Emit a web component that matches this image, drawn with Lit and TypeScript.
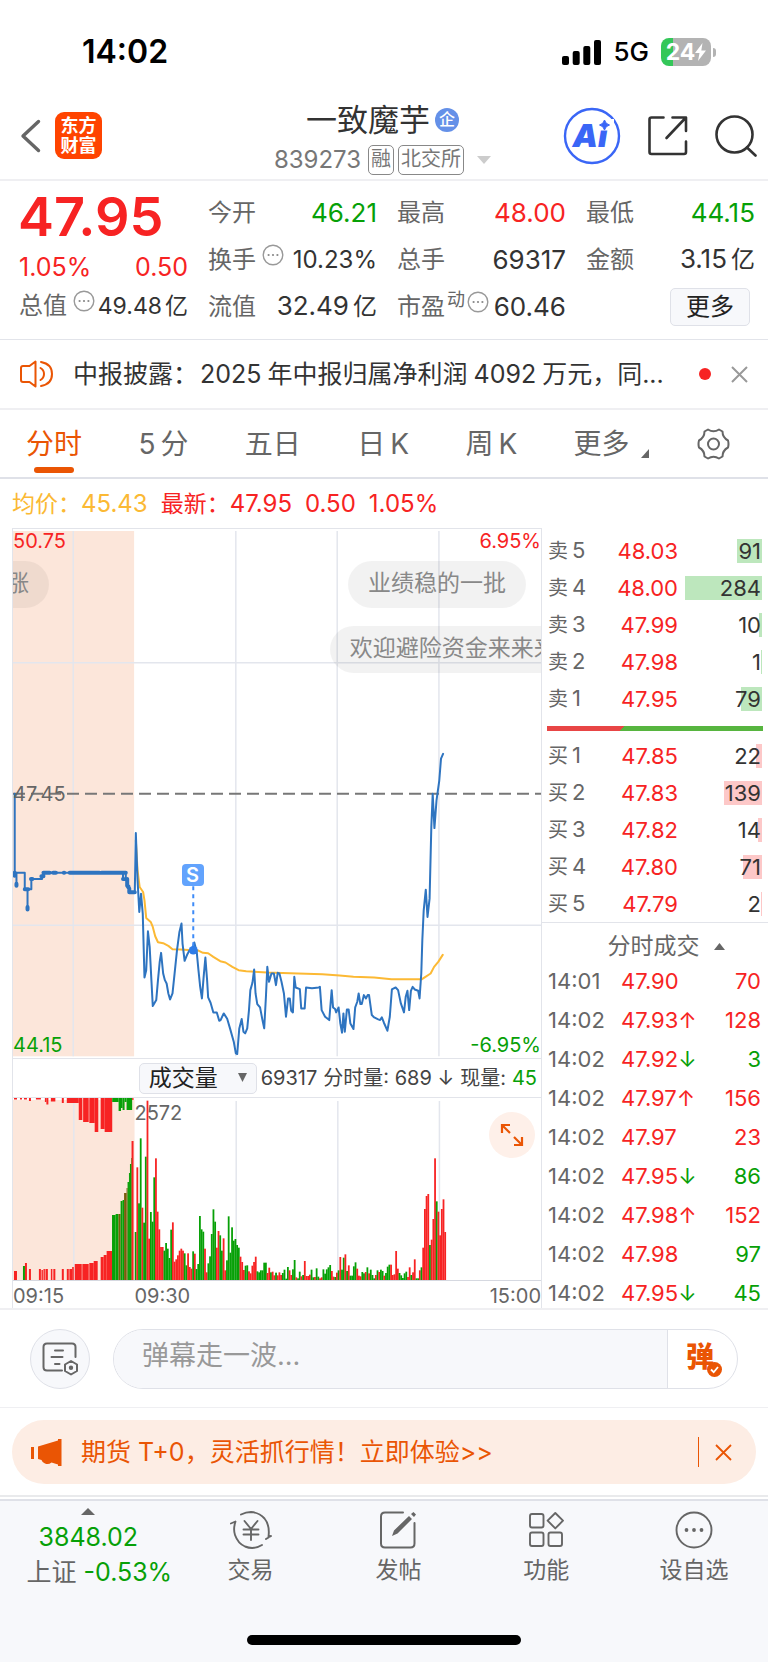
import { LitElement, html, svg, css } from "lit";
import { customElement } from "lit/decorators.js";

const SELLS = [
  { n: 5, price: "48.03", vol: 91, bar: 25 },
  { n: 4, price: "48.00", vol: 284, bar: 77 },
  { n: 3, price: "47.99", vol: 10, bar: 3 },
  { n: 2, price: "47.98", vol: 1, bar: 1 },
  { n: 1, price: "47.95", vol: 79, bar: 21 },
];
const BUYS = [
  { n: 1, price: "47.85", vol: 22, bar: 6 },
  { n: 2, price: "47.83", vol: 139, bar: 38 },
  { n: 3, price: "47.82", vol: 14, bar: 4 },
  { n: 4, price: "47.80", vol: 71, bar: 19 },
  { n: 5, price: "47.79", vol: 2, bar: 1 },
];
const TICKS: [string, string, string, number, string][] = [
  ["14:01", "47.90", "", 70, "up"],
  ["14:02", "47.93", "↑", 128, "up"],
  ["14:02", "47.92", "↓", 3, "down"],
  ["14:02", "47.97", "↑", 156, "up"],
  ["14:02", "47.97", "", 23, "up"],
  ["14:02", "47.95", "↓", 86, "down"],
  ["14:02", "47.98", "↑", 152, "up"],
  ["14:02", "47.98", "", 97, "down"],
  ["14:02", "47.95", "↓", 45, "down"],
];

const PRE_LINE =
  "41,40 41,277 46,277 46,316 46,277 70,277 70,327 78,327 78,388 78,327 89,327 89,296 120,296 120,286 126,286 126,277 362,277 354,277 354,296 362,296 362,277 362,296 368,296 368,316 372,316 372,336 388,336";
const PRICE_LINE =
  "388,336 391,158 396,300 401,395 406,340 411,400 416,592 421,570 426,453 431,500 436,600 440,678 450,660 455,600 460,545 464,518 470,580 475,600 480,610 485,640 490,658 497,640 502,590 510,510 517,455 523,430 526,490 532,542 540,522 545,512 553,512 560,487 567,515 572,570 577,620 582,655 587,590 592,532 597,600 600,652 607,668 615,697 625,697 632,722 636,720 645,700 655,716 664,748 674,785 680,820 684,822 690,745 697,717 702,755 707,760 713,745 718,690 722,630 728,608 733,568 737,640 742,672 750,682 757,720 762,745 767,650 771,560 776,605 783,580 790,580 796,615 801,578 806,580 812,605 819,640 825,710 831,655 836,655 840,692 845,697 849,590 853,622 865,627 869,685 879,685 883,622 900,624 920,622 923,620 928,690 938,710 950,720 957,630 961,682 967,687 970,697 977,682 982,730 987,758 991,700 995,755 1001,688 1006,688 1011,730 1020,747 1025,682 1031,665 1035,640 1040,672 1044,672 1050,645 1056,655 1061,645 1065,645 1073,705 1080,712 1090,717 1097,720 1102,712 1108,728 1118,752 1125,710 1131,628 1142,622 1149,630 1157,670 1166,697 1171,650 1176,632 1181,690 1186,632 1191,620 1197,628 1207,632 1211,655 1216,580 1219,480 1223,390 1229,328 1234,410 1240,355 1245,140 1249,40 1254,143 1260,60 1268,0 1273,-66 1279,-80";
const AVG_LINE =
  "391,180 396,270 402,320 412,335 416,360 421,413 434,425 440,440 447,468 455,486 470,489 485,497 497,507 520,508 555,510 572,511 585,518 600,519 615,530 635,543 650,547 670,560 688,570 710,573 770,577 860,580 930,582 980,586 1020,590 1080,592 1130,597 1218,597 1228,590 1243,580 1253,560 1265,545 1278,524";

/* One entry per minute from 09:30: colour letter, then height. */
const MINUTES =
  "g144 r338 g230 g425 r217 g172 g370 r538 r124 g204 g175 g308 r365 r205 r152 r99 r99 g88 g111 g94 g66 g151 r173 r55 r62 r74 r88 r94 r88 g80 g44 r80 r39 r34 g86 r79 g33 g48 g192 g152 g145 r94 r23 g50 g71 g138 g212 g175 r97 r147 g134 g88 r125 r29 g59 g191 g82 g158 g118 g123 g105 g97 r70 r54 r30 g43 g44 r26 r20 r43 r54 r70 g26 g23 g29 g29 g52 g52 r21 r37 g23 r25 r14 g22 r14 r23 r15 g21 g31 g4 g39 r29 r15 g32 g60 r8 g5 g25 r11 g15 r57 r12 r12 r16 g31 g8 r9 g35 g10 r5 r8 g32 g19 g32 g38 g45 r27 r10 g9 r22 g29 r69 g31 g67 r77 g27 r44 g13 g13 g41 g53 r34 r13 r11 g24 g20 r24 g38 r20 g31 g15 g5 r15 g29 r24 g31 g27 r13 g21 g40 g46 r46 r15 r17 r87 r34 g21 g14 g6 g20 g25 r9 r38 g15 r23 r62 g5 g5 r29 g38 r97 r213 r252 r258 g105 r121 r183 r365 g236 r205 r134 r213 r242 r144".split(" ");

/* Call auction: [x start, x end, height, colour]. */
const PRE_BARS: [number, number, number, string][] = [
  [1, 4, 9, "r"], [10, 12, 14, "g"], [12, 14, 17, "r"], [16, 18, 11, "r"], [26, 28, 11, "r"],
  [28.6, 30, 10, "r"], [30.6, 32, 11, "r"], [32.6, 35, 11, "r"], [38, 39.5, 11, "r"], [40.5, 42.5, 11, "r"],
  [49, 51, 11, "r"], [54, 56, 11, "r"], [56.6, 59.4, 11, "r"], [59.4, 61, 13, "r"], [62, 69, 16, "r"],
  [69.6, 76, 16, "r"], [76.6, 81, 17, "r"], [81, 85, 19, "r"], [88, 91, 23, "r"], [91, 94, 25, "r"],
  [94, 99.4, 29, "r"], [99.4, 103, 65, "g"], [103, 106, 66, "g"], [106, 108, 66, "b"], [108, 110, 79, "g"],
  [110, 111.5, 80, "g"], [111.5, 114, 87, "b"], [114, 115, 92, "b"], [115, 116.4, 98, "g"], [116.4, 117.4, 107, "g"],
  [117.4, 118.7, 116, "g"], [118.7, 119.4, 122, "g"], [119, 121, 139, "r"],
];
const PRE_TOP: [number, number, number, string][] = [
  [1, 4, 1.5, "r"], [7, 9, 1.5, "r"], [11, 14, 1.5, "r"], [16, 18, 3, "r"], [23, 28, 1.5, "r"],
  [32, 33.5, 4, "r"], [33.5, 35.5, 6.5, "r"], [38, 42.5, 3.5, "r"], [49, 51, 5, "r"], [54, 66, 5, "r"],
  [66, 69.6, 22, "r"], [70.4, 76, 24, "r"], [76.6, 82, 25, "r"], [82, 85.6, 34, "r"], [88, 92, 31, "r"],
  [92, 99.6, 34, "r"], [99.6, 106, 4, "g"], [106, 108.4, 13, "g"], [108.4, 110, 10, "g"], [110, 112, 12, "g"],
  [112, 114, 4, "g"], [114, 119.6, 12, "g"], [119.6, 121, 2, "r"],
];
const HUE: Record<string, string> = { r: "#f72323", g: "#07a007", b: "#7a5c0c" };

const infoIcon = html`<svg class="info" viewBox="0 0 22 22" aria-hidden="true">
  <circle cx="11" cy="11" r="9.8" fill="none" stroke="#999" stroke-width="1.4" />
  <circle cx="6.6" cy="11" r="1.1" fill="#888" /><circle cx="11" cy="11" r="1.1" fill="#888" /><circle cx="15.4" cy="11" r="1.1" fill="#888" />
</svg>`;

@customElement("app-root")
export class AppRoot extends LitElement {
  static styles = css`
    :host {
      display: block;
      background: #fff;
      color: #333;
      font-family: Inter, "Noto Sans CJK SC", sans-serif;
      font-size: 24px;
      line-height: 32px;
      --red: #f72323;
      --green: #07a007;
      --orange: #ea5504;
      --line: #e2e4ea;
    }
    * { box-sizing: border-box; }
    button { font: inherit; color: inherit; background: none; border: 0; padding: 0; margin: 0; display: flex; align-items: center; justify-content: center; }
    a { color: inherit; text-decoration: none; }
    svg { display: block; flex: none; }
    table { border-collapse: collapse; width: 100%; }
    td, th { padding: 0; font-weight: 400; }
    .up { color: var(--red); }
    .down { color: var(--green); }
    .num { margin: 0 6px; }
    .unit { margin-left: 4px; font-size: 24px; }

    .status { display: flex; align-items: center; height: 90px; padding: 14px 52px 0 82px; color: #000; }
    .clock { flex: 1; font-size: 32px; font-weight: 600; }
    .net { font-size: 26px; font-weight: 500; margin: 0 12px; }
    .battery { display: flex; align-items: center; gap: 2px; }
    .cell { display: flex; align-items: center; justify-content: center; width: 50px; height: 28px; border-radius: 8px; color: #fff; font-size: 23px; font-weight: 700; background: linear-gradient(90deg, #34c759 24%, #b3b3b3 24%); }
    .nub { width: 3px; height: 9px; border-radius: 0 3px 3px 0; background: #b3b3b3; }

    .header { display: grid; grid-template-columns: 1fr auto 1fr; align-items: center; height: 91px; padding: 2px 11px 0 20px; border-bottom: 2px solid #efeff2; }
    .left, .right { display: flex; align-items: center; }
    .left { gap: 14px; }
    .right { justify-content: flex-end; gap: 26px; }
    .logo { display: block; width: 47px; height: 47px; padding: 4px 0 0 0; border-radius: 9px; background: #ff4400; color: #fff; font-size: 18px; line-height: 20px; font-weight: 700; text-align: center; }
    .title { display: flex; flex-direction: column; align-items: center; margin-right: 12px; padding-top: 6px; }
    .name { display: flex; align-items: center; gap: 5px; margin: 0; font-size: 31px; line-height: 43px; font-weight: 400; }
    .corp { width: 24px; height: 24px; border-radius: 12px; background: #6490e8; color: #fff; font-size: 16px; line-height: 23px; font-weight: 500; text-align: center; }
    .code { display: flex; align-items: center; gap: 4px; height: 38px; color: #777; }
    .tag { height: 30px; padding: 0 2px; border: 1px solid #888; border-radius: 5px; font-size: 20px; line-height: 27px; }
    .code .digits { margin-right: 3px; }
    .code svg { margin-left: 9px; }

    .quote { display: grid; grid-template-columns: repeat(4, minmax(0, 1fr)); gap: 20px; padding: 8px 13px 9px 19px; border-bottom: 1px solid var(--line); font-size: 26px; }
    .cellrow { display: flex; align-items: center; justify-content: space-between; height: 47px; white-space: nowrap; }
    .cellrow.chg { height: 44px; font-size: 25px; }
    .cellrow.low { height: 33px; }
    .cellrow .tight, .cellrow .tight .unit { font-size: 23px; }
    .cellrow .snug { font-size: 24px; }
    .cellrow .tight .unit { margin-left: 3px; }
    .label { display: flex; align-items: center; color: #666; font-size: 24px; }
    .big { height: 56px; font-size: 54px; line-height: 56px; font-weight: 600; margin-left: -1px; }
    .info { width: 22px; height: 22px; margin: 0 0 10px 6px; }
    .sup { font-size: 18px; line-height: 20px; margin: 0 0 14px 2px; }
    .sup + .info { margin-left: 2px; }
    .morebtn { width: 80px; height: 38px; margin: 0 5px 0 auto; border: 1px solid #dfe1e8; border-radius: 5px; background: #f7f8fb; color: #222; font-size: 24px; }

    .news { display: flex; align-items: center; height: 70px; padding: 0 20px; border-bottom: 2px solid #efeff2; font-size: 25px; }
    .news a { flex: 1; min-width: 0; margin-left: 19px; white-space: nowrap; overflow: hidden; }
    .news .year { margin: 0 6px 0 2px; }
    .reddot { width: 12px; height: 12px; border-radius: 6px; background: var(--red); margin-right: 20px; }

    .tabs { display: flex; justify-content: space-between; align-items: center; height: 69px; padding: 0 38px 0 26px; border-bottom: 2px solid #dfe1e8; color: #666; font-size: 28px; }
    .tab { position: relative; height: 67px; white-space: nowrap; gap: 5px; }
    .tab.last { margin-right: -8px; }
    .tab.on { color: var(--orange); }
    .tab.on::after { content: ""; position: absolute; bottom: 4px; left: 8px; right: 8px; height: 6px; border-radius: 3px; background: var(--orange); }
    .corner { align-self: flex-end; margin: 0 0 19px 6px; }

    .legend { display: flex; align-items: center; gap: 13px; height: 49px; padding-left: 12px; }
    .legend .avg { color: #fbb934; }
    .legend .k { font-size: 23px; }

    .main { display: grid; grid-template-columns: minmax(0, 1fr) 226px; padding-left: 12px; overflow: hidden; border-bottom: 2px solid #efeff2; }
    .charts { border-left: 1px solid var(--line); border-right: 1px solid var(--line); border-top: 1px solid var(--line); }
    .plot { position: relative; height: 530px; overflow: hidden; border-bottom: 1px solid var(--line); font-size: 20px; line-height: 24px; color: #666; }
    .plot > svg, .volume > svg { width: 100%; height: 100%; }
    .tl, .tr, .bl, .br, .ml { position: absolute; }
    .tl, .tr { top: 0; }
    .tl, .bl, .ml { left: 0; }
    .tr, .br { right: 0; }
    .bl, .br { bottom: 1px; }
    .ml { top: 50%; transform: translateY(-50%); }
    .bullet { position: absolute; padding: 0 20px; height: 47px; border-radius: 24px; background: rgba(0, 0, 0, 0.05); color: #888; font-size: 23px; line-height: 45px; white-space: nowrap; }
    .b1 { top: 32px; right: calc(100% - 36px); }
    .b2 { top: 32px; right: 15px; }
    .b3 { top: 97px; left: 60%; }
    .mark { position: absolute; left: 34%; top: 335px; width: 22px; height: 22px; margin-left: -11px; border-radius: 4px; background: #62a3fd; color: #fff; font-size: 20px; line-height: 22px; font-weight: 600; text-align: center; }

    .volbar { display: flex; align-items: center; justify-content: flex-end; height: 39px; padding-right: 4px; font-size: 20px; line-height: 24px; color: #444; white-space: nowrap; border-bottom: 1px solid var(--line); }
    .pick { position: relative; margin-right: 4px; }
    .pick select { appearance: none; display: block; width: 118px; height: 31px; padding: 0 0 2px 9px; border: 1px solid #dfe1e8; border-radius: 5px; background: #f7f8fb; color: #222; font: inherit; font-size: 23px; line-height: 28px; }
    .pick svg { position: absolute; right: 10px; top: 10px; }
    .volbar .sp { margin-left: 6px; }
    .volume { position: relative; height: 183px; border-bottom: 1px solid #d5d8e0; font-size: 20px; line-height: 24px; color: #666; }
    .peak { position: absolute; left: 23%; top: 3px; }
    .expand { position: absolute; right: 6px; top: 14px; width: 46px; height: 46px; border-radius: 23px; background: #fef0e9; }
    .times { display: grid; grid-template-columns: 23% 1fr auto; height: 27px; padding: 3px 0 0 0; font-size: 20px; line-height: 24px; color: #666; }

    .book { min-width: 0; font-size: 22px; line-height: 28px; }
    .side { padding: 0 6px; }
    .side.first { padding-top: 4px; }
    .side table { table-layout: fixed; }
    .side tr { height: 37px; }
    .side th { width: 50px; text-align: left; color: #666; }
    .side th span { font-size: 20px; margin-right: 4px; }
    .side .p { width: 80px; text-align: right; color: var(--red); }
    .side .v { text-align: right; padding-right: 1px; background-repeat: no-repeat; background-position: right center; }
    .side .sell { background-image: linear-gradient(#bde7bd, #bde7bd); }
    .side .buy { background-image: linear-gradient(#fdc8c8, #fdc8c8); }
    .ratio { height: 5px; margin: 9px 5px 6px 5px; background: linear-gradient(135deg, #e84545 35%, #57b53f 35%); }
    .tickhead { display: flex; align-items: center; justify-content: center; gap: 14px; width: 100%; height: 39px; padding: 8px 0 0 22px; border-top: 1px solid var(--line); color: #666; font-size: 23px; }
    .ticks { width: 100%; margin-bottom: -5px; padding: 0 7px 0 6px; }
    .ticks tr { height: 39px; }
    .ticks .t { width: 73px; color: #666; text-align: left; }
    .ticks .q { text-align: right; }

    .talk { display: flex; align-items: center; gap: 23px; height: 98px; padding: 0 30px; border-bottom: 1px solid #efeff2; }
    .round { width: 60px; height: 60px; border: 1px solid #dfe1e8; border-radius: 30px; background: #f7f8fb; }
    .say { flex: 1; display: flex; height: 60px; border: 1px solid #dfe1e8; border-radius: 30px; overflow: hidden; }
    .say input { flex: 1; min-width: 0; border: 0; border-right: 1px solid #dfe1e8; background: #f7f8fb; padding: 0 0 6px 28px; font: inherit; font-size: 27px; outline: none; }
    .say input::placeholder { color: #999; opacity: 1; }
    .dan { position: relative; width: 69px; padding: 0 5px 4px 0; color: var(--orange); font-size: 28px; font-weight: 900; }
    .dan svg { position: absolute; right: 15px; bottom: 11px; }

    .promo-wrap { padding: 12px 12px 11px; border-bottom: 2px solid #e9eaec; }
    .promo { display: flex; align-items: center; height: 64px; padding: 0 24px 0 19px; border-radius: 32px; background: #fdede4; color: var(--orange); font-size: 25px; white-space: nowrap; }
    .promo a { flex: 1; margin-left: 19px; }
    .promo .bar { width: 1px; height: 30px; margin-right: 16px; background: var(--orange); }

    .nav { display: grid; grid-template-columns: 23% repeat(4, 1fr); margin-top: 2px; border-top: 2px solid #dfe1e8; padding-top: 7px; background: #f7f8fb; color: #666; font-size: 23px; height: 163px; position: relative; }
    .nav a { display: flex; flex-direction: column; align-items: center; white-space: nowrap; }
    .nav .item { padding-top: 3px; gap: 5px; }
    .nav .index { gap: 3px; font-size: 25px; line-height: 32px; }
    .nav .index svg { margin-bottom: 3px; }
    .nav .sh { padding-left: 22px; }
    .home { position: absolute; left: 50%; bottom: 17px; width: 274px; height: 10px; margin-left: -137px; border-radius: 5px; background: #000; }
  `;

  private grid(y0: number, y1: number) {
    return [210, 680, 973, 1267].map(
      (x) => svg`<line x1=${x} x2=${x} y1=${y0} y2=${y1} stroke="#e3e6ed" stroke-width="1.5" vector-effect="non-scaling-stroke"/>`
    );
  }

  private priceChart() {
    return html`<div class="plot">
      <svg viewBox="36 -756 1526 1590" preserveAspectRatio="none" role="img" aria-label="分时走势">
        <rect x="36" y="-750" width="350" height="1579" fill="#fce6da" />
        ${this.grid(-750, 829)}
        <path d="M36-354H1562M36 435H1562" stroke="#e3e6ed" stroke-width="1.5" vector-effect="non-scaling-stroke" />
        <path d="M36 40H1562" stroke="#777" stroke-width="2" stroke-dasharray="12 6" vector-effect="non-scaling-stroke" />
        <g fill="none" stroke-linejoin="round" stroke-linecap="round">
          <polyline points=${AVG_LINE} stroke="#fcb934" stroke-width="2" vector-effect="non-scaling-stroke" />
          <polyline points=${PRE_LINE} stroke="#2e74c0" stroke-width="2" vector-effect="non-scaling-stroke" />
          <polyline points=${PRICE_LINE} stroke="#2e74c0" stroke-width="2" vector-effect="non-scaling-stroke" />
          <path d="M41 277V286M46 310V316M78 380V388M70 327H80M88 296H92M118 288H124M124 277H142M152 277H160M183 277H184M200 277H286M292 277H362M354 296H356M366 296V316L372 325V336H388" stroke="#2e74c0" stroke-width="4" vector-effect="non-scaling-stroke" />
        </g>
        <path d="M557 318V500" stroke="#3d8bf8" stroke-width="2" stroke-dasharray="4 4" vector-effect="non-scaling-stroke" />
        <ellipse cx="557" cy="510" rx="13" ry="13" fill="#2f7de8" />
      </svg>
      <span class="tl up">50.75</span><span class="tr up">6.95%</span>
      <span class="ml">47.45</span>
      <span class="bl down">44.15</span><span class="br down">-6.95%</span>
      <span class="bullet b1">涨</span>
      <span class="bullet b2">业绩稳的一批</span>
      <span class="bullet b3">欢迎避险资金来来来</span>
      <span class="mark">S</span>
    </div>`;
  }

  private volumeChart() {
    return html`<div class="volume">
      <svg viewBox="0 0 530 182" preserveAspectRatio="none" role="img" aria-label="成交量">
        <rect x="0" y="2" width="122" height="180" fill="#fce6da" />
        ${[61, 224, 326, 428].map((x) => svg`<rect x=${x - 0.7} y="3" width="1.5" height="179" fill="#e3e6ed"/>`)}
        ${PRE_TOP.map(([a, b, h, c]) => svg`<rect x=${a} y="0" width=${b - a} height=${h} fill=${HUE[c]}/>`)}
        ${PRE_BARS.map(([a, b, h, c]) => svg`<rect x=${a} y=${182 - h} width=${b - a} height=${h} fill=${HUE[c]}/>`)}
        ${MINUTES.map((m, i) => {
          const h = Number(m.slice(1)) / 3;
          return svg`<rect x=${(122.2 + i * 1.698).toFixed(2)} y=${182 - h} width="1.8" height=${h} fill=${HUE[m[0]]}/>`;
        })}
      </svg>
      <span class="peak">2572</span>
      <button class="expand" aria-label="全屏">
        <svg width="24" height="24" viewBox="0 0 24 24" fill="none" stroke="#ea5504" stroke-width="2.2">
          <path d="M10 2H2V10M2 2L10 10M22 14V22H14M22 22L14 14" />
        </svg>
      </button>
    </div>`;
  }

  private side(name: string, kind: string, rows: typeof SELLS) {
    return html`<table>
      ${rows.map(
        (r) => html`<tr>
          <th scope="row"><span>${name}</span>${r.n}</th>
          <td class="p">${r.price}</td>
          <td class="v ${kind}" style="background-size:${r.bar}px 24px">${r.vol}</td>
        </tr>`
      )}
    </table>`;
  }

  render() {
    return html`
      <div class="status">
        <span class="clock">14:02</span>
        <svg width="39" height="25" viewBox="0 0 39 25">
          <rect x="0" y="16" width="7" height="9" rx="2" /><rect x="10.7" y="11" width="7" height="14" rx="2" /><rect x="21.3" y="6" width="7" height="19" rx="2" /><rect x="32" y="0" width="7" height="25" rx="2" />
        </svg>
        <span class="net">5G</span>
        <span class="battery">
          <span class="cell">24<svg width="11" height="18" viewBox="0 0 11 18"><path d="M7.5 0L0 10H4.5L3 18L11 7.5H6.3Z" fill="#fff" /></svg></span>
          <span class="nub"></span>
        </span>
      </div>

      <header class="header">
        <div class="left">
          <button aria-label="返回"><svg width="21" height="34" viewBox="0 0 21 34"><path d="M18.5 2.5L3 17L18.5 31.5" fill="none" stroke="#666" stroke-width="3.4" stroke-linecap="round" stroke-linejoin="round" /></svg></button>
          <a class="logo" href="#">东方<br />财富</a>
        </div>
        <div class="title">
          <h1 class="name">一致魔芋<span class="corp">企</span></h1>
          <div class="code">
            <span class="digits">839273</span><span class="tag">融</span><span class="tag">北交所</span>
            <svg width="14" height="8" viewBox="0 0 14 8"><path d="M0 0H14L7 8Z" fill="#ccc" /></svg>
          </div>
        </div>
        <div class="right">
          <button aria-label="Ai">
            <svg width="58" height="58" viewBox="0 0 58 58">
              <circle cx="29" cy="29" r="27" fill="none" stroke="#3a66f6" stroke-width="2.4" />
              <text x="27" y="40" text-anchor="middle" font-family="Inter, sans-serif" font-size="32" font-weight="900" font-style="italic" fill="#3a66f6">Ai</text>
              <rect x="35" y="12" width="16" height="11.5" fill="#fff" />
              <path d="M41.5 13Q42.5 17 46.5 18Q42.5 19 41.5 23Q40.5 19 36.5 18Q40.5 17 41.5 13Z" fill="#3a66f6" stroke="#3a66f6" stroke-width="1" />
            </svg>
          </button>
          <button aria-label="分享">
            <svg width="42" height="42" viewBox="0 0 42 42" fill="none" stroke="#333" stroke-width="2.6" stroke-linecap="round" stroke-linejoin="round">
              <path d="M16.5 2.5H4.5Q2.5 2.5 2.5 4.5V37Q2.5 39 4.5 39H37Q39 39 39 37V26.5M25.5 2.5H39V16M38 3.5L19.5 23" />
            </svg>
          </button>
          <button aria-label="搜索">
            <svg width="42" height="42" viewBox="0 0 42 42" fill="none" stroke="#333" stroke-width="2.6" stroke-linecap="round">
              <circle cx="19.5" cy="19.5" r="18" /><path d="M32 32.5L40.5 40.5" />
            </svg>
          </button>
        </div>
      </header>

      <section class="quote">
        <div>
          <div class="big up">47.95</div>
          <div class="cellrow chg up"><span>1.05%</span><span>0.50</span></div>
          <div class="cellrow low"><span class="label">总值${infoIcon}</span><span class="tight">49.48<span class="unit">亿</span></span></div>
        </div>
        <div>
          <div class="cellrow"><span class="label">今开</span><span class="down">46.21</span></div>
          <div class="cellrow"><span class="label">换手${infoIcon}</span><span class="snug">10.23%</span></div>
          <div class="cellrow"><span class="label">流值</span><span>32.49<span class="unit">亿</span></span></div>
        </div>
        <div>
          <div class="cellrow"><span class="label">最高</span><span class="up">48.00</span></div>
          <div class="cellrow"><span class="label">总手</span><span>69317</span></div>
          <div class="cellrow"><span class="label">市盈<span class="sup">动</span>${infoIcon}</span><span>60.46</span></div>
        </div>
        <div>
          <div class="cellrow"><span class="label">最低</span><span class="down">44.15</span></div>
          <div class="cellrow"><span class="label">金额</span><span>3.15<span class="unit">亿</span></span></div>
          <div class="cellrow"><button class="morebtn">更多</button></div>
        </div>
      </section>

      <section class="news">
        <svg width="34" height="28" viewBox="0 0 34 28" fill="none" stroke="#ea5504" stroke-width="2" stroke-linecap="round" stroke-linejoin="round">
          <path d="M15.5 1.5V26.5L9.5 22H3Q1 22 1 20V8Q1 6 3 6H9.5ZM20.5 8Q24 10 24 14Q24 18 20.5 20M21 2Q32 4 32 14Q32 24 21 26" />
        </svg>
        <a href="#">中报披露：<span class="year">2025</span>年中报归属净利润<span class="num">4092</span>万元，同...</a>
        <span class="reddot"></span>
        <button aria-label="关闭"><svg width="17" height="17" viewBox="0 0 17 17"><path d="M1 1L16 16M16 1L1 16" stroke="#999" stroke-width="2" /></svg></button>
      </section>

      <nav class="tabs">
        <button class="tab on">分时</button>
        <button class="tab"><span>5</span>分</button>
        <button class="tab">五日</button>
        <button class="tab">日<span>K</span></button>
        <button class="tab">周<span>K</span></button>
        <button class="tab last">更多<svg class="corner" width="8" height="9" viewBox="0 0 8 9"><path d="M8 0V9H0Z" fill="#666" /></svg></button>
        <button aria-label="设置">
          <svg width="33" height="32" viewBox="0 0 33 32" fill="none" stroke="#666" stroke-width="2" stroke-linejoin="round">
            <path d="M11 1.5Q16.5 5 22 1.5L25.5 3.5Q25.5 9.5 31 12.5Q32 16 31 19.5Q25.5 22.5 25.5 28.5L22 30.5Q16.5 27 11 30.5L7.5 28.5Q7.5 22.5 2 19.5Q1 16 2 12.5Q7.5 9.5 7.5 3.5Z" /><circle cx="16.5" cy="16" r="5.5" />
          </svg>
        </button>
      </nav>

      <div class="legend">
        <span class="avg"><span class="k">均价：</span>45.43</span>
        <span class="up"><span class="k">最新：</span>47.95</span>
        <span class="up">0.50</span>
        <span class="up">1.05%</span>
      </div>

      <section class="main">
        <div class="charts">
          ${this.priceChart()}
          <div class="volbar">
            <label class="pick"><select aria-label="指标"><option>成交量</option></select><svg width="9" height="9" viewBox="0 0 9 9"><path d="M0 0H9L4.5 9Z" fill="#666" /></svg></label>
            <span>69317</span><span class="sp">分时量: 689 ↓</span><span class="sp">现量:</span><span class="sp down">45</span>
          </div>
          ${this.volumeChart()}
          <div class="times"><span>09:15</span><span>09:30</span><span>15:00</span></div>
        </div>
        <div class="book">
          <div class="side first">${this.side("卖", "sell", SELLS)}</div>
          <div class="ratio"></div>
          <div class="side">${this.side("买", "buy", BUYS)}</div>
          <button class="tickhead">分时成交<svg width="11" height="7" viewBox="0 0 11 7"><path d="M0 7H11L5.5 0Z" fill="#666" /></svg></button>
          <div class="ticks">
            <table>
              ${TICKS.map(
                ([t, p, a, q, d]) => html`<tr>
                  <td class="t">${t}</td>
                  <td class="up">${p}<span class=${a === "↓" ? "down" : "up"}>${a}</span></td>
                  <td class="q ${d}">${q}</td>
                </tr>`
              )}
            </table>
          </div>
        </div>
      </section>

      <section class="talk">
        <button class="round" aria-label="弹幕设置">
          <svg width="37" height="34" viewBox="0 0 37 34" fill="none" stroke="#666" stroke-width="2" stroke-linecap="round">
            <path d="M20 28.5H5Q1.5 28.5 1.5 25V5Q1.5 1.5 5 1.5H30Q33.5 1.5 33.5 5V15M13 8.5H21M9.5 15H20.5M13 22H17.5" />
            <path d="M29 19L35 22.5V29L29 32.5L23 29V22.5Z" stroke-linejoin="round" /><circle cx="29" cy="25.8" r="1.2" fill="#666" />
          </svg>
        </button>
        <div class="say">
          <input type="text" aria-label="弹幕" placeholder="弹幕走一波..." />
          <button class="dan">弹<svg width="15" height="15" viewBox="0 0 15 15"><circle cx="7.5" cy="7.5" r="7.5" fill="#ea5504" /><path d="M4 7.5L6.7 10.2L11 5" fill="none" stroke="#fff" stroke-width="1.8" /></svg></button>
        </div>
      </section>

      <div class="promo-wrap">
        <div class="promo">
          <svg width="31" height="27" viewBox="0 0 31 27" fill="#ea5504">
            <path d="M0 8H3V20H0ZM7 7.5L27 1.5V0H30.5V27H27V25.5L20.5 23.5Q17.5 26 14 24.5Q11.5 24 10.5 21L7 20Z" />
          </svg>
          <a href="#">期货 T+0，灵活抓行情！立即体验&gt;&gt;</a>
          <span class="bar"></span>
          <button aria-label="关闭"><svg width="17" height="17" viewBox="0 0 17 17"><path d="M1 1L16 16M16 1L1 16" stroke="#ea5504" stroke-width="1.8" /></svg></button>
        </div>
      </div>

      <nav class="nav">
        <a class="index" href="#">
          <svg width="14" height="7" viewBox="0 0 14 7"><path d="M0 7H14L7 0Z" fill="#666" /></svg>
          <span class="down">3848.02</span>
          <span class="sh">上证 <span class="down">-0.53%</span></span>
        </a>
        <a class="item" href="#">
          <svg width="42" height="38" viewBox="0 0 42 38" fill="none" stroke="#666" stroke-width="1.9" stroke-linecap="round" stroke-linejoin="round">
            <path d="M11 3.5Q16 1 21 1Q29 1.5 34.5 7.5Q40 14 38.5 26L41 25M38.5 26.5L36 28M0.8 12.5L5.5 10.5Q3 18 5 24Q8 32.5 15 35.5Q24 39 32 34" />
            <path d="M14.5 10L21 18L27.5 10M21 18V29M13.5 18.5H28.5M13.5 23.5H28.5" />
          </svg>交易</a>
        <a class="item" href="#">
          <svg width="38" height="38" viewBox="0 0 38 38" fill="none" stroke="#666" stroke-width="2" stroke-linecap="round">
            <path d="M24 1.5H6Q2 1.5 2 5.5V32.5Q2 36.5 6 36.5H31.5Q35.5 36.5 35.5 32.5V12" />
            <path d="M13 25L15 19.5L30 5L33 8L18.5 22.5ZM32 3L34.5 1L37 3.5L35 6Z" fill="#666" stroke="none" />
          </svg>发帖</a>
        <a class="item" href="#">
          <svg width="38" height="38" viewBox="0 0 38 38" fill="none" stroke="#666" stroke-width="1.9" stroke-linejoin="round">
            <rect x="3" y="3" width="13.5" height="13.5" rx="2" /><rect x="3" y="21.5" width="13.5" height="13.5" rx="2" /><rect x="21.5" y="21.5" width="13.5" height="13.5" rx="2" /><path d="M28.3 2L36 9.7L28.3 17.4L20.6 9.7Z" />
          </svg>功能</a>
        <a class="item" href="#">
          <svg width="38" height="38" viewBox="0 0 38 38"><circle cx="19" cy="19" r="17.5" fill="none" stroke="#666" stroke-width="1.9" /><circle cx="11.5" cy="19" r="1.9" fill="#666" /><circle cx="19" cy="19" r="1.9" fill="#666" /><circle cx="26.5" cy="19" r="1.9" fill="#666" /></svg>设自选</a>
        <span class="home"></span>
      </nav>
    `;
  }
}
